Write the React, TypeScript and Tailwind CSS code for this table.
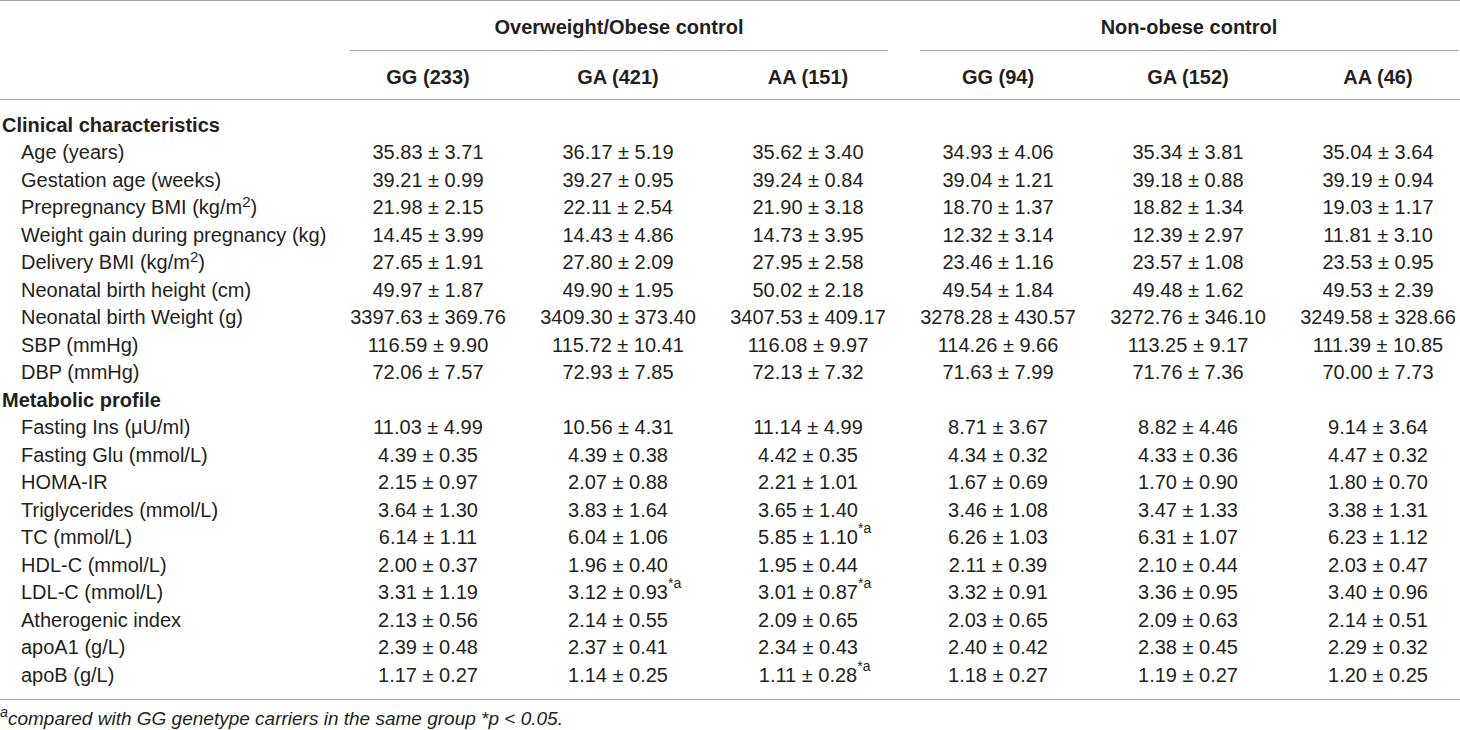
import React from "react";

type Cell = { v: string; sup?: string };
type Row = { label: React.ReactNode; cells?: Cell[]; heading?: boolean };

const c = (s: string): Cell => {
  if (s.endsWith("*a")) return { v: s.slice(0, -2), sup: "*a" };
  return { v: s };
};

const rows: Row[] = [
  { label: "Clinical characteristics", heading: true },
  { label: "Age (years)", cells: ["35.83 ± 3.71", "36.17 ± 5.19", "35.62 ± 3.40", "34.93 ± 4.06", "35.34 ± 3.81", "35.04 ± 3.64"].map(c) },
  { label: "Gestation age (weeks)", cells: ["39.21 ± 0.99", "39.27 ± 0.95", "39.24 ± 0.84", "39.04 ± 1.21", "39.18 ± 0.88", "39.19 ± 0.94"].map(c) },
  {
    label: (
      <>
        Prepregnancy BMI (kg/m<sup>2</sup>)
      </>
    ),
    cells: ["21.98 ± 2.15", "22.11 ± 2.54", "21.90 ± 3.18", "18.70 ± 1.37", "18.82 ± 1.34", "19.03 ± 1.17"].map(c),
  },
  { label: "Weight gain during pregnancy (kg)", cells: ["14.45 ± 3.99", "14.43 ± 4.86", "14.73 ± 3.95", "12.32 ± 3.14", "12.39 ± 2.97", "11.81 ± 3.10"].map(c) },
  {
    label: (
      <>
        Delivery BMI (kg/m<sup>2</sup>)
      </>
    ),
    cells: ["27.65 ± 1.91", "27.80 ± 2.09", "27.95 ± 2.58", "23.46 ± 1.16", "23.57 ± 1.08", "23.53 ± 0.95"].map(c),
  },
  { label: "Neonatal birth height (cm)", cells: ["49.97 ± 1.87", "49.90 ± 1.95", "50.02 ± 2.18", "49.54 ± 1.84", "49.48 ± 1.62", "49.53 ± 2.39"].map(c) },
  { label: "Neonatal birth Weight (g)", cells: ["3397.63 ± 369.76", "3409.30 ± 373.40", "3407.53 ± 409.17", "3278.28 ± 430.57", "3272.76 ± 346.10", "3249.58 ± 328.66"].map(c) },
  { label: "SBP (mmHg)", cells: ["116.59 ± 9.90", "115.72 ± 10.41", "116.08 ± 9.97", "114.26 ± 9.66", "113.25 ± 9.17", "111.39 ± 10.85"].map(c) },
  { label: "DBP (mmHg)", cells: ["72.06 ± 7.57", "72.93 ± 7.85", "72.13 ± 7.32", "71.63 ± 7.99", "71.76 ± 7.36", "70.00 ± 7.73"].map(c) },
  { label: "Metabolic profile", heading: true },
  { label: "Fasting Ins (μU/ml)", cells: ["11.03 ± 4.99", "10.56 ± 4.31", "11.14 ± 4.99", "8.71 ± 3.67", "8.82 ± 4.46", "9.14 ± 3.64"].map(c) },
  { label: "Fasting Glu (mmol/L)", cells: ["4.39 ± 0.35", "4.39 ± 0.38", "4.42 ± 0.35", "4.34 ± 0.32", "4.33 ± 0.36", "4.47 ± 0.32"].map(c) },
  { label: "HOMA-IR", cells: ["2.15 ± 0.97", "2.07 ± 0.88", "2.21 ± 1.01", "1.67 ± 0.69", "1.70 ± 0.90", "1.80 ± 0.70"].map(c) },
  { label: "Triglycerides (mmol/L)", cells: ["3.64 ± 1.30", "3.83 ± 1.64", "3.65 ± 1.40", "3.46 ± 1.08", "3.47 ± 1.33", "3.38 ± 1.31"].map(c) },
  { label: "TC (mmol/L)", cells: ["6.14 ± 1.11", "6.04 ± 1.06", "5.85 ± 1.10*a", "6.26 ± 1.03", "6.31 ± 1.07", "6.23 ± 1.12"].map(c) },
  { label: "HDL-C (mmol/L)", cells: ["2.00 ± 0.37", "1.96 ± 0.40", "1.95 ± 0.44", "2.11 ± 0.39", "2.10 ± 0.44", "2.03 ± 0.47"].map(c) },
  { label: "LDL-C (mmol/L)", cells: ["3.31 ± 1.19", "3.12 ± 0.93*a", "3.01 ± 0.87*a", "3.32 ± 0.91", "3.36 ± 0.95", "3.40 ± 0.96"].map(c) },
  { label: "Atherogenic index", cells: ["2.13 ± 0.56", "2.14 ± 0.55", "2.09 ± 0.65", "2.03 ± 0.65", "2.09 ± 0.63", "2.14 ± 0.51"].map(c) },
  { label: "apoA1 (g/L)", cells: ["2.39 ± 0.48", "2.37 ± 0.41", "2.34 ± 0.43", "2.40 ± 0.42", "2.38 ± 0.45", "2.29 ± 0.32"].map(c) },
  { label: "apoB (g/L)", cells: ["1.17 ± 0.27", "1.14 ± 0.25", "1.11 ± 0.28*a", "1.18 ± 0.27", "1.19 ± 0.27", "1.20 ± 0.25"].map(c) },
];

const heads = ["GG (233)", "GA (421)", "AA (151)", "GG (94)", "GA (152)", "AA (46)"];

export default function App() {
  return (
    <div
      className="w-[1460px] h-[730px] overflow-hidden bg-white text-[#231f20] text-[20px] leading-none"
      style={{ fontFamily: '"Liberation Sans", Arial, Helvetica, sans-serif' }}
    >
      <div className="w-[1473px]">
        <div className="border-t border-[#a3a3a3]">
          <div className="grid grid-cols-[333px_570px_570px] h-[50px]">
            <div />
            <div className="ml-[17px] mr-[15px] border-b border-[#a3a3a3] flex items-center justify-center font-bold pt-[2px]">
              Overweight/Obese control
            </div>
            <div className="ml-[17px] mr-[15px] border-b border-[#a3a3a3] flex items-center justify-center font-bold pt-[2px]">
              Non-obese control
            </div>
          </div>
          <div className="grid grid-cols-[333px_repeat(6,190px)] h-[49px] border-b border-[#a3a3a3]">
            <div />
            {heads.map((h) => (
              <div key={h} className="flex items-center justify-center font-bold pt-[4px]">
                {h}
              </div>
            ))}
          </div>
        </div>
        <div className="pt-[11px] pb-[10px] border-b border-[#a3a3a3]">
          {rows.map((r, i) => (
            <div key={i} className="grid grid-cols-[333px_repeat(6,190px)] h-[27.5px] items-center">
              {r.heading ? (
                <div className="pl-[2px] font-bold whitespace-nowrap">{r.label}</div>
              ) : (
                <div className="pl-[21px] whitespace-nowrap">{r.label}</div>
              )}
              {r.cells?.map((cell, j) => (
                <div key={j} className="flex justify-center whitespace-nowrap">
                  <span className="relative">
                    {cell.v}
                    {cell.sup && (
                      <span className="absolute left-full top-[-6px] text-[14px]">{cell.sup}</span>
                    )}
                  </span>
                </div>
              ))}
            </div>
          ))}
        </div>
        <div className="pt-[9px] italic text-[19px] whitespace-nowrap">
          <sup>a</sup>compared with GG genetype carriers in the same group *p &lt; 0.05.
        </div>
      </div>
    </div>
  );
}
